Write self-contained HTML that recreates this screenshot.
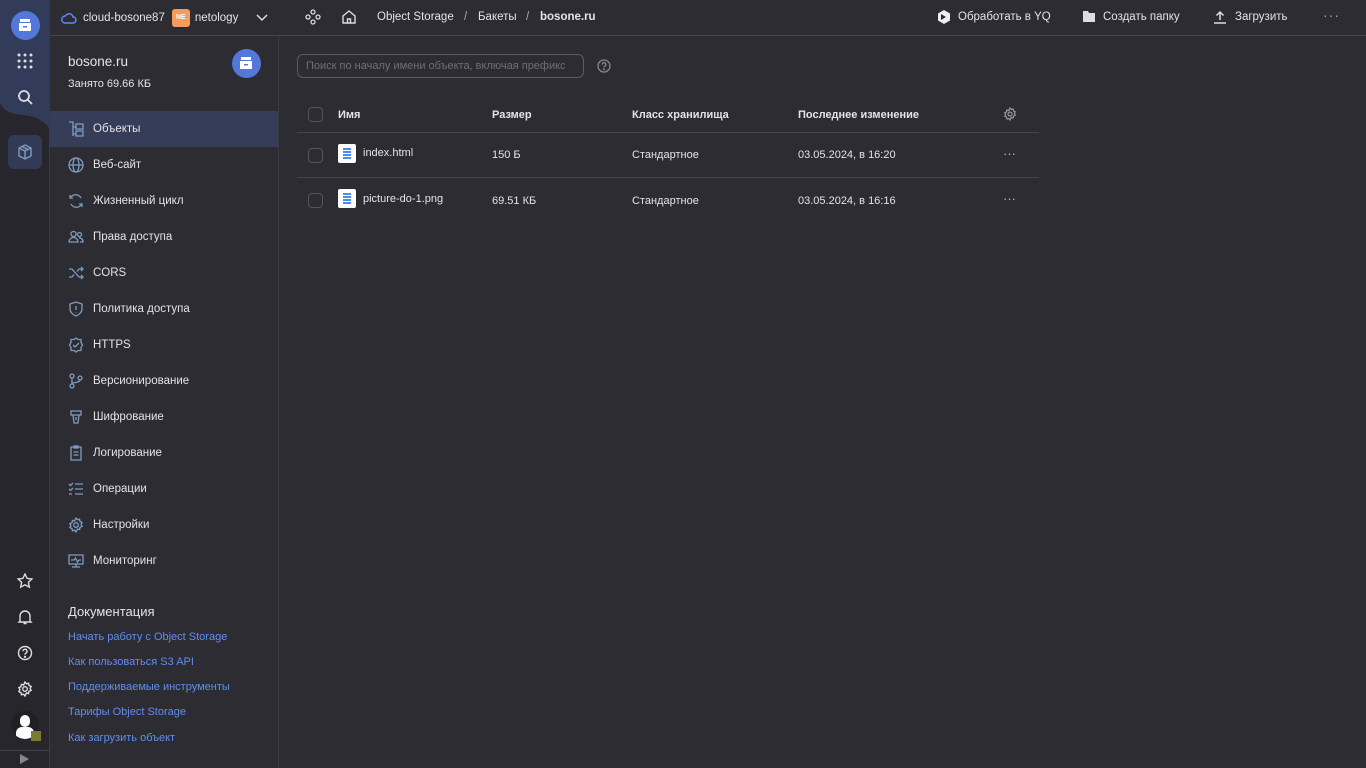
<!DOCTYPE html>
<html><head><meta charset="utf-8">
<style>
*{box-sizing:border-box;margin:0;padding:0}
body{width:1366px;height:768px;overflow:hidden;background:#2d2c33;font-family:"Liberation Sans","Noto Sans CJK SC",sans-serif;color:#e4e4e6;font-size:11.5px;position:relative}
.rail{position:absolute;left:0;top:0;width:50px;height:768px;background:#27262d;border-right:1px solid #3b3a42}
.top{position:absolute;left:50px;top:0;right:0;height:36px;border-bottom:1px solid #45444c;display:flex;align-items:center;font-size:11.5px}
.side{position:absolute;left:50px;top:36px;width:229px;height:732px;border-right:1px solid #3b3a42}
.mi{position:absolute;left:0;width:228px;height:36px;display:flex;align-items:center;padding-left:43px;font-size:11.5px}
.mi svg{position:absolute;left:18px;top:10px}
.link{position:absolute;left:18px;color:#5f8ef0;font-size:11px}
.row{position:absolute;left:297px;width:742px;border-bottom:1px solid #46454c}
.cb{position:absolute;left:308px;width:15px;height:15px;border:1px solid #55545c;border-radius:4px}
.t{position:absolute;font-size:11px}
.doc{position:absolute;left:338px;width:18px;height:19px;background:#fff;border-radius:2px}
.doc i{position:absolute;left:5px;width:8px;height:1.5px;background:#4a8ef0}
</style></head><body>
<div class="rail">
<svg style="position:absolute;left:0;top:0" width="49" height="130"><path d="M0 0H49V128C42 119 34 116 22 115C10 114 3 110 0 103Z" fill="#323b5a"/></svg>
<div style="position:absolute;left:11px;top:11px;width:29px;height:29px;border-radius:50%;background:#5378da"></div>
<svg style="position:absolute;left:18px;top:18px" width="14" height="14"><rect x="2" y="1" width="10" height="3" fill="#fff"/><rect x="1" y="5" width="12" height="8" fill="#fff"/><rect x="5" y="8" width="4" height="1.5" fill="#5378da"/></svg>
<svg style="position:absolute;left:17px;top:53px" width="16" height="16" fill="#ddd"><circle cx="2" cy="2" r="1.5"/><circle cx="8" cy="2" r="1.5"/><circle cx="14" cy="2" r="1.5"/><circle cx="2" cy="8" r="1.5"/><circle cx="8" cy="8" r="1.5"/><circle cx="14" cy="8" r="1.5"/><circle cx="2" cy="14" r="1.5"/><circle cx="8" cy="14" r="1.5"/><circle cx="14" cy="14" r="1.5"/></svg>
<svg style="position:absolute;left:17px;top:89px" width="16" height="16" fill="none" stroke="#ddd" stroke-width="1.8"><circle cx="7" cy="7" r="5"/><path d="M11 11l4 4"/></svg>
<div style="position:absolute;left:8px;top:135px;width:34px;height:34px;border-radius:6px;background:#323a56"></div>
<svg style="position:absolute;left:17px;top:144px" width="16" height="16" fill="none" stroke="#7f9cc0" stroke-width="1.4"><path d="M8 1l6 3v8l-6 3-6-3V4z M2 4l6 3 6-3 M8 7v8 M5 2.5l6 3"/></svg>
<svg style="position:absolute;left:17px;top:573px" width="16" height="16" fill="none" stroke="#ddd" stroke-width="1.4"><path d="M8 1l2.1 4.4 4.8.6-3.5 3.3.9 4.8L8 11.8 3.7 14.1l.9-4.8L1.1 6l4.8-.6z"/></svg>
<svg style="position:absolute;left:17px;top:609px" width="16" height="16" fill="none" stroke="#ddd" stroke-width="1.4"><path d="M3 12V7a5 5 0 0110 0v5l1 1H2z M6.5 14.5h3"/></svg>
<svg style="position:absolute;left:17px;top:645px" width="16" height="16" fill="none" stroke="#ddd" stroke-width="1.4"><circle cx="8" cy="8" r="6.5"/><path d="M6 6.3a2 2 0 113 1.7c-.8.4-1 .9-1 1.6"/><circle cx="8" cy="11.8" r=".5" fill="#ddd"/></svg>
<svg style="position:absolute;left:17px;top:681px" width="16" height="16" fill="none" stroke="#ddd" stroke-width="1.4"><circle cx="8" cy="8" r="2.3"/><path d="M8 1l1.4 1.8 2.2-.6.4 2.3 2.1.9-1 2 1 2-2.1.9-.4 2.3-2.2-.6L8 15l-1.4-1.8-2.2.6-.4-2.3-2.1-.9 1-2-1-2 2.1-.9.4-2.3 2.2.6z"/></svg>
<div style="position:absolute;left:11px;top:711px;width:28px;height:28px;border-radius:50%;background:#1f1f24;overflow:hidden"><div style="position:absolute;left:9px;top:4px;width:10px;height:12px;border-radius:5px;background:#fff"></div><div style="position:absolute;left:5px;top:16px;width:18px;height:14px;border-radius:6px 6px 0 0;background:#fff"></div></div>
<div style="position:absolute;left:31px;top:731px;width:10px;height:10px;background:#7a7a30"></div>
<div style="position:absolute;left:0;top:750px;width:49px;border-top:1px solid #45444c"></div>
<div style="position:absolute;left:20px;top:754px;width:0;height:0;border-left:9px solid #888;border-top:5px solid transparent;border-bottom:5px solid transparent"></div>
</div>

<div class="top">
<svg style="margin-left:11px" width="16" height="12" fill="none" stroke="#5f8ef0" stroke-width="1.4"><path d="M4 11h8a3 3 0 000-6 4 4 0 00-7.5-1A3.5 3.5 0 004 11z"/></svg>
<span style="margin-left:6px">cloud-bosone87</span>
<span style="margin-left:7px;width:18px;height:18px;border-radius:3px;background:#f59b5c;color:#fff;font-size:7px;font-weight:bold;display:inline-flex;align-items:center;justify-content:center">NE</span>
<span style="margin-left:5px">netology</span>
<svg style="margin-left:18px" width="12" height="8" fill="none" stroke="#ddd" stroke-width="1.5"><path d="M1 1l5 5 5-5"/></svg>
<svg style="position:absolute;left:255px;top:9px" width="16" height="16" fill="none" stroke="#ddd" stroke-width="1.3"><circle cx="8" cy="3" r="2"/><circle cx="3" cy="8" r="2"/><circle cx="13" cy="8" r="2"/><circle cx="8" cy="13" r="2"/></svg>
<svg style="position:absolute;left:291px;top:9px" width="16" height="16" fill="none" stroke="#ddd" stroke-width="1.4"><path d="M2 7l6-5 6 5v7H2z M6.5 14v-4h3v4"/></svg>
<span style="position:absolute;left:327px;top:11px">Object Storage</span><span style="position:absolute;left:414px;top:11px;color:#aaa">/</span><span style="position:absolute;left:428px;top:11px">Бакеты</span><span style="position:absolute;left:476px;top:11px;color:#aaa">/</span><span style="position:absolute;left:490px;top:11px;font-weight:bold">bosone.ru</span>
<svg style="position:absolute;left:886px;top:9px" width="16" height="16"><path d="M8 1l6 3.5v7L8 15l-6-3.5v-7z" fill="#eee"/><path d="M5 5l5 3-5 3z" fill="#2d2c33"/></svg>
<span style="position:absolute;left:908px;top:11px">Обработать в YQ</span>
<svg style="position:absolute;left:1032px;top:10px" width="14" height="13"><path d="M1 1h5l1 2h6v9H1z" fill="#ddd"/></svg>
<span style="position:absolute;left:1053px;top:11px">Создать папку</span>
<svg style="position:absolute;left:1163px;top:10px" width="14" height="14" fill="none" stroke="#ddd" stroke-width="1.5"><path d="M7 10V2 M3.5 5.5L7 2l3.5 3.5 M1 13h12"/></svg>
<span style="position:absolute;left:1185px;top:11px">Загрузить</span>
<span style="position:absolute;left:1273px;top:7px;color:#aaa;font-size:14px;letter-spacing:1px">···</span>
</div>

<div class="side">
<div style="position:absolute;left:18px;top:18px;font-size:13.5px">bosone.ru</div>
<div style="position:absolute;left:18px;top:42px;font-size:11px">Занято 69.66 КБ</div>
<div style="position:absolute;left:182px;top:13px;width:29px;height:29px;border-radius:50%;background:#5378da"></div>
<svg style="position:absolute;left:189px;top:20px" width="14" height="14"><rect x="2" y="1" width="10" height="3" fill="#fff"/><rect x="1" y="5" width="12" height="8" fill="#fff"/><rect x="5" y="8" width="4" height="1.5" fill="#5378da"/></svg>
<div class="mi" style="top:75px;background:#363d59"><svg width="16" height="16" fill="none" stroke="#7f9cc0" stroke-width="1.3"><path d="M1 1h4v14 M5 6h3 M5 13h3 M8 3h7v5H8z M8 10h7v5H8z"/></svg>Объекты</div>
<div class="mi" style="top:111px"><svg width="16" height="16" fill="none" stroke="#7f9cc0" stroke-width="1.3"><circle cx="8" cy="8" r="7"/><ellipse cx="8" cy="8" rx="3" ry="7"/><path d="M1 8h14"/></svg>Веб-сайт</div>
<div class="mi" style="top:147px"><svg width="16" height="16" fill="none" stroke="#7f9cc0" stroke-width="1.3"><path d="M3 4a6 6 0 0110 1 M13 12a6 6 0 01-10-1 M2 2v3h3 M14 14v-3h-3"/></svg>Жизненный цикл</div>
<div class="mi" style="top:183px"><svg width="16" height="16" fill="none" stroke="#7f9cc0" stroke-width="1.3"><circle cx="5.5" cy="5" r="2.5"/><circle cx="11.5" cy="5.5" r="2"/><path d="M1 13a4.5 4.5 0 019 0z M11 9a3.5 3.5 0 014 4h-3"/></svg>Права доступа</div>
<div class="mi" style="top:219px"><svg width="16" height="16" fill="none" stroke="#7f9cc0" stroke-width="1.3"><path d="M1 4h3l7 8h4 M1 12h3l2-2.5 M9 6.5L11 4h4 M13 2l2 2-2 2 M13 10l2 2-2 2"/></svg>CORS</div>
<div class="mi" style="top:255px"><svg width="16" height="16" fill="none" stroke="#7f9cc0" stroke-width="1.3"><path d="M8 1l6 2v5c0 3-3 6-6 7-3-1-6-4-6-7V3z M8 5v4 M8 11v.5"/></svg>Политика доступа</div>
<div class="mi" style="top:291px"><svg width="16" height="16" fill="none" stroke="#7f9cc0" stroke-width="1.3"><path d="M8 1l2 1.5h3v3l1.5 2.5L13 10.5v3h-3L8 15l-2-1.5H3v-3L1.5 8 3 5.5v-3h3z M5 8l2 2 4-4"/></svg>HTTPS</div>
<div class="mi" style="top:327px"><svg width="16" height="16" fill="none" stroke="#7f9cc0" stroke-width="1.3"><circle cx="4" cy="3" r="2"/><circle cx="4" cy="13" r="2"/><circle cx="12" cy="5" r="2"/><path d="M4 5v6 M12 7c0 3-8 2-8 4"/></svg>Версионирование</div>
<div class="mi" style="top:363px"><svg width="16" height="16" fill="none" stroke="#7f9cc0" stroke-width="1.3"><path d="M3 2h10v4H3z M5 6l1 8h4l1-8 M8 8v3"/></svg>Шифрование</div>
<div class="mi" style="top:399px"><svg width="16" height="16" fill="none" stroke="#7f9cc0" stroke-width="1.3"><path d="M3 2h10v13H3z M6 1h4v2H6z M5.5 7h5 M5.5 10h5"/></svg>Логирование</div>
<div class="mi" style="top:435px"><svg width="16" height="16" fill="none" stroke="#7f9cc0" stroke-width="1.3"><path d="M1 3l1.5 1.5L5 2 M7 3h8 M1 8l1.5 1.5L5 7 M7 8h8 M1 13h3 M7 13h8"/></svg>Операции</div>
<div class="mi" style="top:471px"><svg width="16" height="16" fill="none" stroke="#7f9cc0" stroke-width="1.3"><circle cx="8" cy="8" r="2.3"/><path d="M8 1l1.4 1.8 2.2-.6.4 2.3 2.1.9-1 2 1 2-2.1.9-.4 2.3-2.2-.6L8 15l-1.4-1.8-2.2.6-.4-2.3-2.1-.9 1-2-1-2 2.1-.9.4-2.3 2.2.6z"/></svg>Настройки</div>
<div class="mi" style="top:507px"><svg width="16" height="16" fill="none" stroke="#7f9cc0" stroke-width="1.3"><path d="M1 2h14v9H1z M8 11v3 M4 14h8 M3 7h3l1.5-2 2 4L11 7h2"/></svg>Мониторинг</div>
<div style="position:absolute;left:18px;top:568px;font-size:13px">Документация</div>
<div class="link" style="top:595px">Начать работу с Object Storage</div>
<div class="link" style="top:620px">Как пользоваться S3 API</div>
<div class="link" style="top:645px">Поддерживаемые инструменты</div>
<div class="link" style="top:670px">Тарифы Object Storage</div>
<div class="link" style="top:696px">Как загрузить объект</div>
</div>

<div style="position:absolute;left:297px;top:54px;width:287px;height:24px;border:1px solid #5c5b63;border-radius:6px;padding:5px 8px;color:#6f6e76;font-size:11px;white-space:nowrap;overflow:hidden">Поиск по началу имени объекта, включая префикс</div>
<svg style="position:absolute;left:597px;top:59px" width="14" height="14" fill="none" stroke="#888" stroke-width="1.3"><circle cx="7" cy="7" r="6"/><path d="M5.2 5.5a1.8 1.8 0 113 1.3c-.7.4-1.2.7-1.2 1.5"/><circle cx="7" cy="10.3" r=".4"/></svg>

<div class="row" style="top:98px;height:35px"></div>
<div class="cb" style="top:107px"></div>
<div class="t" style="left:338px;top:109px;font-weight:bold">Имя</div>
<div class="t" style="left:492px;top:109px;font-weight:bold">Размер</div>
<div class="t" style="left:632px;top:109px;font-weight:bold">Класс хранилища</div>
<div class="t" style="left:798px;top:109px;font-weight:bold">Последнее изменение</div>
<svg style="position:absolute;left:1003px;top:107px" width="14" height="14" fill="none" stroke="#999" stroke-width="1.2"><circle cx="7" cy="7" r="2"/><path d="M7 1l1.2 1.5 1.9-.5.4 2 1.8.8-.9 1.7.9 1.7-1.8.8-.4 2-1.9-.5L7 13l-1.2-1.5-1.9.5-.4-2-1.8-.8.9-1.7-.9-1.7 1.8-.8.4-2 1.9.5z"/></svg>

<div class="row" style="top:133px;height:45px"></div>
<div class="cb" style="top:148px"></div>
<div class="doc" style="top:144px"><i style="top:4px"></i><i style="top:7px"></i><i style="top:10px"></i><i style="top:13px"></i></div>
<div class="t" style="left:363px;top:147px">index.html</div>
<div class="t" style="left:492px;top:149px">150 Б</div>
<div class="t" style="left:632px;top:149px">Стандартное</div>
<div class="t" style="left:798px;top:149px">03.05.2024, в 16:20</div>
<div class="t" style="left:1003px;top:146px;color:#bbb;font-size:13px">···</div>

<div class="cb" style="top:193px"></div>
<div class="doc" style="top:189px"><i style="top:4px"></i><i style="top:7px"></i><i style="top:10px"></i><i style="top:13px"></i></div>
<div class="t" style="left:363px;top:193px">picture-do-1.png</div>
<div class="t" style="left:492px;top:195px">69.51 КБ</div>
<div class="t" style="left:632px;top:195px">Стандартное</div>
<div class="t" style="left:798px;top:195px">03.05.2024, в 16:16</div>
<div class="t" style="left:1003px;top:191px;color:#bbb;font-size:13px">···</div>
</body></html>
